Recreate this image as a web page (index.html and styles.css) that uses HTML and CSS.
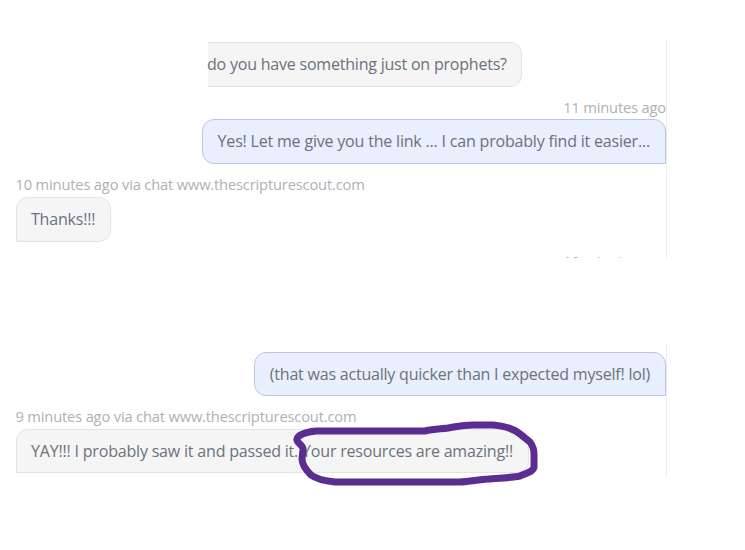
FILE: index.html
```html
<!DOCTYPE html>
<html lang="en">
<head>
  <meta charset="UTF-8" />
  <meta name="viewport" content="width=device-width, initial-scale=1.0"/>
  <title>Chat</title>
  <link rel="stylesheet" href="styles.css">
</head>
<body>

  <!-- First part of the chat -->
  <section class="chat chat-first">
    <div class="bubble visitor cut">do you have something just on prophets?</div>
    <div class="meta right">11 minutes ago</div>
    <div class="bubble agent">Yes! Let me give you the link ... I can probably find it easier...</div>
    <div class="meta">10 minutes ago via chat www.thescripturescout.com</div>
    <div class="bubble visitor">Thanks!!!</div>
    <div class="meta right">10 minutes ago</div>
  </section>

  <!-- Second part of the chat -->
  <section class="chat chat-second">
    <div class="bubble agent">(that was actually quicker than I expected myself! lol)</div>
    <div class="meta">9 minutes ago via chat www.thescripturescout.com</div>
    <div class="bubble visitor">YAY!!! I probably saw it and passed it. Your resources are amazing!!</div>
  </section>

  <!-- Hand drawn circle -->
  <svg class="marker" width="745" height="550" viewBox="0 0 745 550">
    <path d="M303 450 C304 445 296 443 297 439 C298 435 306 432 316 431 L425 431 C434 429 441 429 448 428 C458 426 468 425 474 425 L493 425 C506 426 514 429 520 434 L530 442 C533 446 534 449 534 454 L534 467 C534 471 527 473 520 476 C511 478 497 478 488 479 C474 480 468 482 460 482 L335 482 C325 481 315 478 311 475 C306 470 302 464 302 459 Z"/>
  </svg>

</body>
</html>
```

FILE: styles.css
```css
* { box-sizing: border-box; margin: 0; padding: 0; }

body {
  width: 745px;
  height: 550px;
  background: #fff;
  font-family: "Open Sans", sans-serif;
  overflow: hidden;
}

.chat {
  display: flex;
  flex-direction: column;
  align-items: flex-start;
  width: 667px;
  padding-left: 15.5px;
  border-right: 1px solid #ececee;
  overflow: hidden;
}

.chat-first {
  height: 218px;
  margin-top: 40px;
  padding-top: 2px;
}

.chat-second {
  height: 133px;
  margin-top: 86px;
  padding-top: 8px;
}

.bubble {
  flex: none;
  height: 45px;
  padding: 0 15px 0 14.5px;
  border: 1px solid #e3e4e6;
  border-radius: 12px;
  color: #6b727c;
  font-size: 16px;
  letter-spacing: -0.19px;
  line-height: 42px;
  white-space: nowrap;
}

.visitor {
  background: #f5f5f5;
  border-bottom-left-radius: 0;
}

.agent {
  align-self: flex-end;
  background: #e9effc;
  border-color: #b9c7e2;
  border-bottom-right-radius: 0;
}

/* message that runs out of the left edge */
.cut {
  margin-left: 192.5px;
  padding: 0 14.5px 0 0;
  border-left: none;
  border-top-left-radius: 0;
  text-indent: -1px;
  letter-spacing: -0.21px;
}

.meta {
  flex: none;
  height: 32.25px;
  padding-top: 9.5px;
  color: #aeb1b5;
  font-size: 14.7px;
  letter-spacing: -0.17px;
  line-height: 21px;
  white-space: nowrap;
}

.right {
  align-self: flex-end;
}

.chat-second .bubble {
  height: 44px;
}

.chat-second .meta {
  height: 33px;
}

.chat-second .agent {
  letter-spacing: -0.21px;
}

.marker {
  position: absolute;
  top: 0;
  left: 0;
  fill: none;
  stroke: #5c2d91;
  stroke-width: 7;
  stroke-linecap: round;
  stroke-linejoin: round;
}
```
